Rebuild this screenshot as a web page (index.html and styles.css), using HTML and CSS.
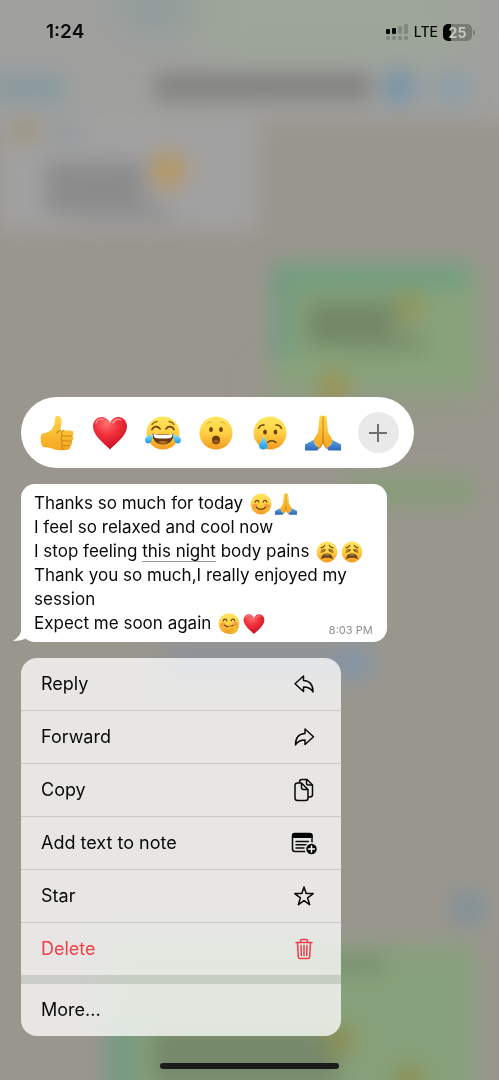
FILE: index.html
```html
<!DOCTYPE html>
<html lang="en">
<head>
<meta charset="utf-8">
<meta name="viewport" content="width=device-width, initial-scale=1">
<title>Message actions</title>
<link rel="stylesheet" href="styles.css">
</head>
<body>
<svg class="backdrop" viewBox="0 0 499 1080" preserveAspectRatio="none" aria-hidden="true">
  <defs>
    <filter id="soft" x="-50%" y="-50%" width="200%" height="200%"><feGaussianBlur stdDeviation="11"/></filter>
    <filter id="wide" x="-50%" y="-50%" width="200%" height="200%"><feGaussianBlur stdDeviation="20"/></filter>
  </defs>
  <rect width="499" height="1080" fill="#99968e"/>
  <g filter="url(#soft)">
    <rect x="-40" y="-40" width="580" height="160" fill="#a0a09e"/>
    <rect x="0" y="115" width="258" height="115" fill="#a1a1a1"/>
  </g>
  <g filter="url(#wide)">
    <rect x="200" y="-50" width="265" height="115" fill="#9da699"/>
    <ellipse cx="155" cy="8" rx="40" ry="24" fill="#8c9b9a"/>
    <rect x="270" y="380" width="210" height="20" fill="#899d79"/>
  </g>
  <g filter="url(#soft)">
    <rect x="-10" y="74" width="75" height="28" fill="#889a9f"/>
    <rect x="155" y="74" width="215" height="26" fill="#80807e"/>
    <circle cx="399" cy="87" r="18" fill="#7894a8"/>
    <circle cx="452" cy="88" r="16" fill="#879daa"/>
    <circle cx="24" cy="131" r="12" fill="#9b9070"/>
    <rect x="46" y="124" width="36" height="14" fill="#90979a"/>
    <rect x="45" y="162" width="100" height="52" fill="#8b8b8b"/>
    <rect x="80" y="205" width="90" height="17" fill="#8f8f8f"/>
    <circle cx="168" cy="170" r="17" fill="#b8965a"/>
    <rect x="272" y="262" width="204" height="128" fill="#88a37c"/>
    <rect x="272" y="265" width="196" height="23" fill="#6f9e80"/>
    <rect x="274" y="270" width="16" height="90" fill="#6c9a80"/>
    <rect x="306" y="300" width="90" height="48" fill="#738868"/>
    <rect x="345" y="334" width="80" height="18" fill="#788c6b"/>
    <circle cx="410" cy="307" r="15" fill="#929458"/>
    <circle cx="333" cy="386" r="16" fill="#9a924c"/>
    <rect x="345" y="475" width="128" height="32" fill="#889c7a"/>
    <rect x="165" y="647" width="190" height="31" fill="#8b929c"/>
    <circle cx="355" cy="663" r="17" fill="#8295a8"/>
    <circle cx="467" cy="908" r="17" fill="#7e919b"/>
    <rect x="108" y="944" width="365" height="160" fill="#87a17b"/>
    <rect x="110" y="1020" width="22" height="80" fill="#6e9983"/>
    <rect x="150" y="1026" width="190" height="60" fill="#76896a"/>
    <rect x="320" y="956" width="65" height="17" fill="#788c6d"/>
    <circle cx="340" cy="1040" r="16" fill="#8b8e50"/>
    <circle cx="408" cy="1080" r="16" fill="#8c8e4c"/>
  </g>
</svg>

<svg class="sprite" aria-hidden="true">
  <defs>
    <linearGradient id="face" x1="0" y1="0" x2="0" y2="1"><stop offset="0" stop-color="#ffe75f"/><stop offset=".5" stop-color="#ffd044"/><stop offset="1" stop-color="#f39a20"/></linearGradient>
    <linearGradient id="skin" x1="0" y1="0" x2="0" y2="1"><stop offset="0" stop-color="#ffd64a"/><stop offset="1" stop-color="#f5a51e"/></linearGradient>
    <radialGradient id="love" cx=".4" cy=".2" r=".8"><stop offset="0" stop-color="#ff7272"/><stop offset=".45" stop-color="#f1303a"/><stop offset="1" stop-color="#c80f25"/></radialGradient>
    <linearGradient id="tear" x1="0" y1="0" x2="0" y2="1"><stop offset="0" stop-color="#8de2ff"/><stop offset="1" stop-color="#1698e8"/></linearGradient>
    <linearGradient id="sleeve" x1="0" y1="0" x2="0" y2="1"><stop offset="0" stop-color="#5ea3e6"/><stop offset="1" stop-color="#2b67b5"/></linearGradient>

    <symbol id="e-thumb" viewBox="0 0 36 36">
      <path d="M2.500 19c3-1 7.500-1.500 10-4.500 2.200-2.800 3.500-5.500 3.500-9.500 0-3 1-4.500 2.800-4.200 3.200.5 4.200 4 3.700 7.200-.2 2-.8 4.500-1 7.500h10c3.500 0 4 4 1.500 5.500 2 1.500 2 4-.5 5 1.500 1.700.8 4-1.500 4.500.8 2-.3 4-2.500 4.300-6 1-12 .5-15.500-1.300-2-1-5-1-9-1.500-2.500-3-3-9-1.500-13z" fill="url(#skin)"/>
      <path d="M33 21h-9c-2.500-.3-2-5 1-5.500M32.500 26H24c-2.500-.3-2.500-4.500 0-5M31 30.500h-7c-2.300-.3-2.300-4 0-4.500M24 30.500c-1.300.7-1.300 3 .3 4M21.500 15.500c-1.500 0-3 1-3.500 3" fill="none" stroke="#cf861c" stroke-width="1.100" stroke-linecap="round"/>
    </symbol>
    <symbol id="e-heart" viewBox="0 0 36 36">
      <path d="M18 34.500C13 29 1 21 1 11.500 1 6 5 2 9.500 2c4 0 7 2.500 8.500 6 1.500-3.500 4.500-6 8.500-6C31 2 35 6 35 11.500 35 21 23 29 18 34.500z" fill="url(#love)"/>
      <path d="M4 8c1-3 4-4.500 7-3.500M21 8c2-3 5-4.500 8-3" fill="none" stroke="#ffb0ac" stroke-width="1.500" stroke-linecap="round" opacity=".7"/>
    </symbol>
    <symbol id="e-joy" viewBox="0 0 36 36">
      <circle cx="18" cy="18" r="16.500" fill="url(#face)"/>
      <path d="M7 14.500c1.500-3.500 5.500-4 8-.8M21 13.700c2.500-3.200 6.500-2.700 8 .8" fill="none" stroke="#70420c" stroke-width="1.800" stroke-linecap="round"/>
      <path d="M7 9.500c1.500-2 3-2.800 5-3M24 6.500c2 .2 3.500 1 5 3" fill="none" stroke="#9a6515" stroke-width="1.300" stroke-linecap="round"/>
      <path d="M7.500 18.500c6 1.300 15 1.300 21 0 0 7-4 11-10.500 11S7.500 25.500 7.500 18.500z" fill="#6a3a0b"/>
      <path d="M8.500 19c6 1.300 13 1.300 19 0-.2 2.500-.8 3.500-2 4-5 .8-10 .8-15 0-1.200-.5-1.800-1.500-2-4z" fill="#fff"/>
      <path d="M13 27c3-1.500 7-1.500 10 0-3 2.500-7 2.500-10 0z" fill="#b96b2c"/>
      <path d="M8.500 19.500C5 20 0 21.500 0 25c0 3.500 4 4.500 6 2 1.500-2 1.500-5 2.500-7.500zM27.500 19.500c3.500.5 8.500 2 8.500 5.500 0 3.500-4 4.500-6 2-1.500-2-1.500-5-2.500-7.500z" fill="url(#tear)"/>
    </symbol>
    <symbol id="e-wow" viewBox="0 0 36 36">
      <circle cx="18" cy="18" r="16.500" fill="url(#face)"/>
      <ellipse cx="13" cy="14.500" rx="1.900" ry="2.500" fill="#70420c"/><ellipse cx="23" cy="14.500" rx="1.900" ry="2.500" fill="#70420c"/>
      <ellipse cx="18" cy="25" rx="4" ry="4.200" fill="#713d0b"/><ellipse cx="18" cy="26.500" rx="2.500" ry="1.800" fill="#9b5d1b"/>
      <path d="M9 9c1-1.500 2.500-2 4-2M23 7c1.500 0 3 .5 4 2" fill="none" stroke="#d9a02c" stroke-linecap="round"/>
    </symbol>
    <symbol id="e-cry" viewBox="0 0 36 36">
      <circle cx="18" cy="18" r="16.500" fill="url(#face)"/>
      <ellipse cx="13" cy="17" rx="1.900" ry="2.600" fill="#70420c"/><ellipse cx="23.500" cy="17" rx="1.900" ry="2.600" fill="#70420c"/>
      <path d="M6.500 13.500c1-2.500 3-3.800 5.500-3.500M24 10c2.500-.3 4.500 1 5.500 3.500M15.500 27.500c2-2.500 6.500-2.500 8.500 0" fill="none" stroke="#70420c" stroke-width="1.500" stroke-linecap="round"/>
      <path d="M11.500 21c1 3.500 4 6.500 4 9.500 0 2.800-2 4-4.200 4-2.600 0-4.300-1.500-4.300-4 0-3 3.500-6 4.500-9.500z" fill="url(#tear)"/>
    </symbol>
    <symbol id="e-pray" viewBox="0 0 36 36">
      <path d="M17.900 2c0-2-2.900-2-3.400 0l-1.500 15-5 9 6 8c3-2 4-6 4-10zM18.100 2c0-2 2.900-2 3.400 0L23 17l5 9-6 8c-3-2-4-6-4-10z" fill="url(#skin)"/>
      <path d="M18 2v22c0 4-1.500 7-3.500 9M18 24c0 4 1.500 7 3.500 9" fill="none" stroke="#c77d14" stroke-width="1" stroke-linecap="round"/>
      <path d="M0 29.500l8.500-4.500c.5 4 2.500 6 5.500 8l-1.500 2.500H0zM36 29.500L27.500 25c-.5 4-2.500 6-5.500 8l1.500 2.500H36z" fill="url(#sleeve)"/>
    </symbol>
    <symbol id="e-smile" viewBox="0 0 36 36">
      <circle cx="18" cy="18" r="17" fill="url(#face)"/>
      <ellipse cx="8" cy="21" rx="4.500" ry="3.500" fill="#fc763b" opacity=".5"/><ellipse cx="28" cy="21" rx="4.500" ry="3.500" fill="#fc763b" opacity=".5"/>
      <path d="M8.500 15c1-4 5-4 6 0M21.500 15c1-4 5-4 6 0M10.500 23c3.500 5 11.500 5 15 0" fill="none" stroke="#70420c" stroke-width="2" stroke-linecap="round"/>
    </symbol>
    <symbol id="e-weary" viewBox="0 0 36 36">
      <circle cx="18" cy="18" r="17" fill="url(#face)"/>
      <path d="M8 11c3 0 5-1 6.500-4M28 11c-3 0-5-1-6.500-4M8 18c3 .5 5.500-.5 7-3.500-2-.5-4-.2-6 .5M28 18c-3 .5-5.500-.5-7-3.500 2-.5 4-.2 6 .5" fill="none" stroke="#70420c" stroke-width="1.700" stroke-linecap="round"/>
      <path d="M8.500 30c0-6 4-9.500 9.500-9.500s9.500 3.500 9.500 9.500c-3-2-6-2.500-9.500-2.500S11.500 28 8.500 30z" fill="#6b4219"/>
      <path d="M12 23.500c3-2 9-2 12 0z" fill="#dbc28d"/>
    </symbol>
    <symbol id="e-giggle" viewBox="0 0 36 36">
      <circle cx="18" cy="17.500" r="17" fill="url(#face)"/>
      <ellipse cx="8" cy="19" rx="4.500" ry="3.500" fill="#fc763b" opacity=".5"/><ellipse cx="29" cy="18" rx="4" ry="3.500" fill="#fc763b" opacity=".5"/>
      <path d="M8.500 13c1-4 5-4 6 0M21.500 13c1-4 5-4 6 0M11 20c3 2.500 9 3 14 0" fill="none" stroke="#70420c" stroke-width="2" stroke-linecap="round"/>
      <path d="M14 25c3-3 7-4 10-3 3-3.500 5-3.500 5-1 2.500 0 3.500 2 2 4 1 5-3 8.500-8 8.500-4 0-5-2-5-4.500-4 0-6-2-4-4z" fill="#fbbd34" stroke="#d98d20"/>
      <path d="M18 28l7-3M20 31l6-3" stroke="#d98d20" stroke-linecap="round"/>
    </symbol>
  </defs>
</svg>

<div class="screen">
  <header class="status">
    <time class="clock">1:24</time>
    <div class="signals">
      <svg class="bars" viewBox="0 0 23 17" role="img" aria-label="Signal">
        <g fill="#050505"><rect x="0" y="5" width="4" height="5" rx="1"/><rect x="6" y="4" width="4" height="6" rx="1"/></g>
        <g fill="#828780"><rect x="12" y="2" width="4" height="8" rx="1"/><rect x="18" y="0" width="4" height="10" rx="1"/><rect x="0" y="12" width="4" height="4" rx="1.500"/><rect x="6" y="12" width="4" height="4" rx="1.500"/><rect x="12" y="12" width="4" height="4" rx="1.500"/><rect x="18" y="12" width="4" height="4" rx="1.500"/></g>
      </svg>
      <span class="network">LTE</span>
      <span class="power"><span class="battery">25</span><span class="nub"></span></span>
    </div>
  </header>

  <main class="sheet">
    <div class="reactions" role="group" aria-label="Reactions">
      <button class="react" aria-label="Thumbs up"><svg><use href="#e-thumb"/></svg></button>
      <button class="react" aria-label="Heart"><svg><use href="#e-heart"/></svg></button>
      <button class="react" aria-label="Tears of joy"><svg><use href="#e-joy"/></svg></button>
      <button class="react" aria-label="Surprised"><svg><use href="#e-wow"/></svg></button>
      <button class="react" aria-label="Crying"><svg><use href="#e-cry"/></svg></button>
      <button class="react" aria-label="Folded hands"><svg><use href="#e-pray"/></svg></button>
      <button class="more-reactions" aria-label="More reactions"><svg viewBox="0 0 20 20"><path d="M10 1v18M1 10h18" stroke="#6f6f6f" stroke-width="2" fill="none"/></svg></button>
    </div>

    <article class="bubble">
      <svg class="tail" viewBox="0 0 20 20" aria-hidden="true"><path d="M8 0v8c0 4-3 8-8 11 6 0 10-1 14-3l6-4V0z" fill="#fff"/></svg>
      <p class="message">Thanks so much for today <svg class="emoji"><use href="#e-smile"/></svg><svg class="emoji"><use href="#e-pray"/></svg><br>
      I feel so relaxed and cool now<br>
      I stop feeling <span class="hinted">this night</span> body pains <svg class="emoji"><use href="#e-weary"/></svg><svg class="emoji"><use href="#e-weary"/></svg><br>
      Thank you so much,I really enjoyed my session<br>
      Expect me soon again <svg class="emoji"><use href="#e-giggle"/></svg><svg class="emoji"><use href="#e-heart"/></svg></p>
      <time class="sent">8:03 PM</time>
    </article>

    <div class="menu" role="menu">
      <button class="item" role="menuitem">Reply
        <svg class="icon" viewBox="0 0 26 26"><path d="M12.500 5v4.500c6 .2 9.500 4 9.500 11.500-2-3.500-5-5-9.500-5V20.500L4 12.700z"/></svg></button>
      <button class="item" role="menuitem">Forward
        <svg class="icon" viewBox="0 0 26 26"><path d="M14 5v4.500C8 9.700 4.500 13.500 4.500 21c2-3.500 5-5 9.500-5v4.500l8.500-7.800z"/></svg></button>
      <button class="item" role="menuitem">Copy
        <svg class="icon" viewBox="0 0 26 26"><path d="M8.500 6V5c0-1.500 1-2.500 2.500-2.500h5l5.500 5.500v9.500c0 1.500-1 2.500-2.500 2.500h-1.500M15.500 2.500V6c0 1.300.7 2 2 2h4M6.500 6h4l6.500 6.500V21c0 1.500-.8 2.500-2.300 2.500H6.500C5 23.500 4 22.500 4 21V8.500C4 7 5 6 6.500 6zM10.500 6v4.500c0 1.300.7 2 2 2H17"/></svg></button>
      <button class="item" role="menuitem">Add text to note
        <svg class="icon" viewBox="0 0 26 26"><rect x="1.500" y="3.500" width="19.500" height="18" rx="2.500"/><path d="M1 8V5.500C1 4 2 3 3.500 3H19c1.500 0 2.500 1 2.500 2.500V8z" fill="#050505" stroke="none"/><path d="M5 11.500h12.500M5 14.700h12M5 18h8"/><circle cx="20.500" cy="19" r="6" fill="#050505" stroke="#e6e6e2"/><path d="M20.500 16v6M17.500 19h6" stroke="#fff"/></svg></button>
      <button class="item" role="menuitem">Star
        <svg class="icon" viewBox="0 0 26 26"><path d="M13 4l2.200 6.600h7l-5.600 4.200 2 6.900-5.600-4.100-5.600 4.100 2-6.900-5.600-4.200h7z"/></svg></button>
      <button class="item danger" role="menuitem">Delete
        <svg class="icon" viewBox="0 0 26 26"><path d="M5 6.500h16M9.500 6.500V5c0-1 .6-1.500 1.500-1.500h4c.9 0 1.500.5 1.500 1.500v1.500M6.500 6.500l.8 14.500c.1 1 .8 1.500 1.700 1.500h8c.9 0 1.600-.5 1.700-1.500l.8-14.500M10 9.500l.3 10M13 9.500v10M16 9.500l-.3 10"/></svg></button>
      <div class="divider" role="separator"></div>
      <button class="item" role="menuitem">More...</button>
    </div>
  </main>
  <div class="home"></div>
</div>
</body>
</html>
```

FILE: styles.css
```css
* { box-sizing: border-box; }

body {
  margin: 0;
  background: #99968e;
  color: #090909;
  font-family: Inter, "Liberation Sans", sans-serif;
}

button {
  margin: 0;
  padding: 0;
  border: 0;
  background: none;
  color: inherit;
  font: inherit;
}

.backdrop {
  position: fixed;
  inset: 0;
  width: 100%;
  height: 100%;
}

.sprite {
  position: absolute;
  width: 0;
  height: 0;
}

.screen {
  position: relative;
  display: flex;
  flex-direction: column;
  min-height: 100vh;
}

.status {
  display: flex;
  align-items: center;
  justify-content: space-between;
  padding: 20px 24px 0 46px;
}

.clock {
  font-size: 19px;
  line-height: 24px;
  font-weight: 600;
}

.signals {
  display: flex;
  align-items: center;
  gap: 5px;
}

.bars {
  width: 23px;
  height: 17px;
}

.network {
  font-size: 14px;
  line-height: 24px;
  font-weight: 500;
}

.power {
  display: flex;
  align-items: center;
  gap: 1px;
}

.battery {
  width: 29px;
  border-radius: 5px;
  background: linear-gradient(90deg, #050505 26%, #777b74 26%);
  color: #c5c9c1;
  font-size: 14px;
  line-height: 17px;
  font-weight: 700;
  text-align: center;
}

.nub {
  width: 2px;
  height: 5px;
  border-radius: 0 2px 2px 0;
  background: #777b74;
}

.sheet {
  display: flex;
  flex-direction: column;
  align-items: flex-start;
  gap: 16px;
  margin-top: auto;
  padding: 0 21px;
}

.reactions {
  display: flex;
  align-items: center;
  justify-content: space-between;
  width: 86%;
  padding: 15px 15px 15px 18px;
  border-radius: 36px;
  background: #fff;
}

.react,
.react svg {
  display: block;
  width: 36px;
  height: 36px;
}

.more-reactions {
  display: grid;
  place-items: center;
  width: 41px;
  height: 41px;
  border-radius: 50%;
  background: #e9e9e9;
}

.more-reactions svg {
  width: 20px;
  height: 20px;
}

.bubble {
  position: relative;
  width: 80%;
  padding: 7px 13px;
  border-radius: 14px;
  background: #fff;
}

.tail {
  position: absolute;
  left: -8px;
  bottom: 0;
  width: 20px;
  height: 20px;
}

.message {
  position: relative;
  margin: 0;
  font-size: 17px;
  line-height: 24px;
}

.emoji {
  width: 22px;
  height: 22px;
  margin: -2px 1px -2px 2px;
  vertical-align: -4px;
}

.hinted {
  text-decoration: underline 1px #999;
  text-decoration-skip-ink: none;
  text-underline-offset: 4px;
}

.sent {
  position: absolute;
  right: 14px;
  bottom: 4px;
  color: #8e8e8e;
  font-size: 11px;
  line-height: 16px;
}

.menu {
  width: 70%;
  border-radius: 16px;
  overflow: hidden;
  background: rgb(255 255 255 / 76%);
}

.item {
  display: flex;
  align-items: center;
  justify-content: space-between;
  width: 100%;
  min-height: 52px;
  padding: 0 24px 0 20px;
  font-size: 18px;
  line-height: 24px;
  text-align: left;
}

.item + .item {
  min-height: 53px;
  border-top: 1px solid #c9cac7;
}

.icon {
  width: 26px;
  height: 26px;
  overflow: visible;
  fill: none;
  stroke: currentColor;
  stroke-width: 1.5;
  stroke-linejoin: round;
  stroke-linecap: round;
}

.danger { color: #ed4147; }

.divider {
  height: 9px;
  background: rgb(110 120 110 / 24%);
}

.home {
  align-self: center;
  width: 36%;
  height: 6px;
  margin: 27px 0 11px;
  border-radius: 3px;
  background: #1b1b1b;
}
```
